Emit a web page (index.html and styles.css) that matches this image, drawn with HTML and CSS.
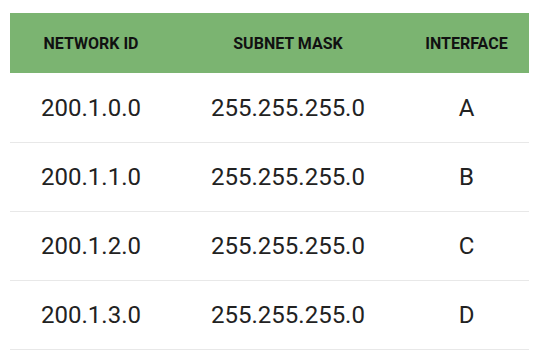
FILE: index.html
```html
<!DOCTYPE html>
<html>
<head>
<meta charset="utf-8">
<link rel="stylesheet" href="styles.css">
</head>
<body>
<div class="wrap">
  <table class="routes">
    <colgroup>
      <col class="c1"><col class="c2"><col class="c3">
    </colgroup>
    <thead>
      <tr><th>NETWORK ID</th><th>SUBNET MASK</th><th>INTERFACE</th></tr>
    </thead>
    <tbody>
      <tr class="first"><td>200.1.0.0</td><td>255.255.255.0</td><td>A</td></tr>
      <tr><td>200.1.1.0</td><td>255.255.255.0</td><td>B</td></tr>
      <tr><td>200.1.2.0</td><td>255.255.255.0</td><td>C</td></tr>
      <tr><td>200.1.3.0</td><td>255.255.255.0</td><td>D</td></tr>
    </tbody>
  </table>
</div>
</body>
</html>
```
FILE: styles.css
```css
html, body {
  margin: 0;
  padding: 0;
  background: #ffffff;
}
.wrap {
  padding: 13px 0 0 10px;
}
.routes {
  width: 519px;
  border-collapse: collapse;
  table-layout: fixed;
  font-family: Roboto, "Liberation Sans", sans-serif;
}
.c1 { width: 162px; }
.c2 { width: 232px; }
.c3 { width: 125px; }
.routes th {
  height: 60px;
  padding: 0;
  background: #7bb471;
  color: #111111;
  font-size: 16px;
  font-weight: 700;
  text-align: center;
  vertical-align: middle;
}
.routes td {
  height: 68px;
  padding: 0;
  border-bottom: 1px solid #e8e8e8;
  color: #222222;
  font-size: 24px;
  font-weight: 400;
  text-align: center;
  vertical-align: middle;
}
.routes .first td {
  height: 69px;
}
```
